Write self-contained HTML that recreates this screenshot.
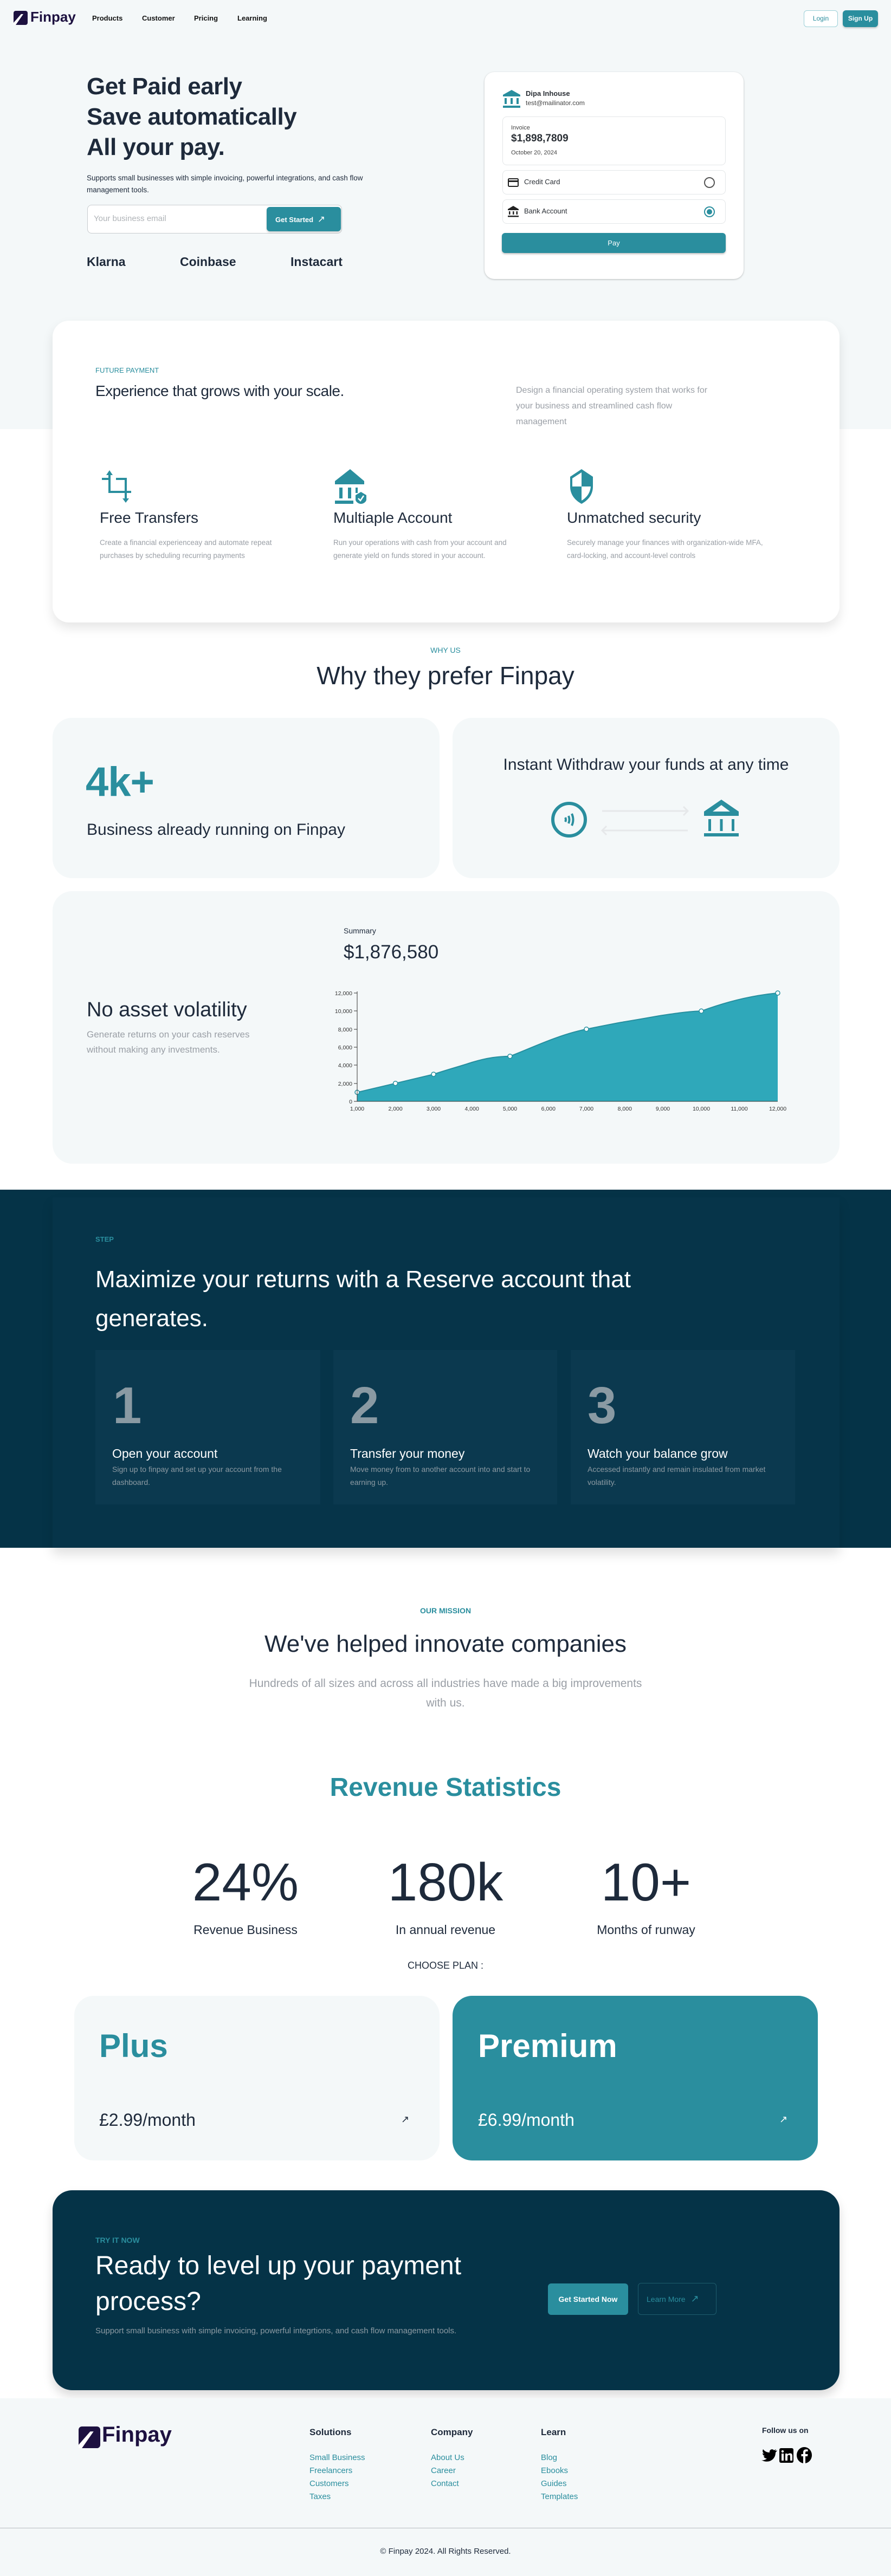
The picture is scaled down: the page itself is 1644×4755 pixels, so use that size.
<!DOCTYPE html>
<html><head><meta charset="utf-8">
<style>
*{margin:0;padding:0;box-sizing:border-box}
body{width:1644px;height:4755px;position:relative;background:#fff;font-family:"Liberation Sans",Arial,sans-serif;color:#1e2a3b;overflow:hidden}
.a{position:absolute;white-space:nowrap}
.teal{color:#2a8e9e}
.gray{color:#9a9fa6}
.card{position:absolute;border-radius:36px}
</style></head><body>

<div class="a" style="left:0;top:0;width:1644px;height:792px;background:#f4f8f9"></div>

<svg class="a" style="left:25px;top:20px" width="26" height="26" viewBox="0 0 26 26"><rect width="26" height="26" rx="4" fill="#1d1140"/><path d="M0 22 L14 6 L18 6 L4 26 L0 26Z" fill="#fff"/></svg>
<div class="a" style="left:56px;top:16px;font-size:26px;font-weight:700;color:#1d1140">Finpay</div>
<div class="a" style="left:170px;top:26px;font-size:13px;font-weight:700;color:#111">Products</div>
<div class="a" style="left:262px;top:26px;font-size:13px;font-weight:700;color:#111">Customer</div>
<div class="a" style="left:358px;top:26px;font-size:13px;font-weight:700;color:#111">Pricing</div>
<div class="a" style="left:438px;top:26px;font-size:13px;font-weight:700;color:#111">Learning</div>
<div class="a" style="left:1483px;top:19px;width:63px;height:31px;border:1px solid #9cd0d8;border-radius:6px;background:#fff;color:#2a8e9e;font-size:12px;text-align:center;line-height:29px">Login</div>
<div class="a" style="left:1555px;top:19px;width:65px;height:31px;border-radius:6px;background:#2a8e9e;color:#fff;font-size:12px;font-weight:700;text-align:center;line-height:31px;box-shadow:0 2px 3px rgba(0,0,0,.2)">Sign Up</div>

<div class="a" style="left:160px;top:132px;font-size:44px;font-weight:700;line-height:56px;color:#1e2a3b;letter-spacing:-0.5px">Get Paid early<br>Save automatically<br>All your pay.</div>
<div class="a" style="left:160px;top:318px;font-size:13.5px;line-height:22px;color:#1e2a3b;white-space:normal;width:540px">Supports small businesses with simple invoicing, powerful integrations, and cash flow management tools.</div>
<div class="a" style="left:161px;top:378px;width:470px;height:53px;border:1px solid #c8cccf;border-radius:8px;background:#fff"></div>
<div class="a" style="left:173px;top:395px;font-size:15px;color:#b0b4b8">Your business email</div>
<div class="a" style="left:492px;top:382px;width:137px;height:45px;border-radius:6px;background:#2a8e9e;color:#fff;font-size:13px;font-weight:700;line-height:45px;padding-left:16px;box-shadow:0 2px 3px rgba(0,0,0,.2)">Get Started <span style="font-size:17px;font-weight:400;margin-left:4px">↗</span></div>
<div class="a" style="left:160px;top:470px;font-size:23px;font-weight:700;color:#1e2a3b">Klarna</div>
<div class="a" style="left:332px;top:470px;font-size:23px;font-weight:700;color:#1e2a3b">Coinbase</div>
<div class="a" style="left:536px;top:470px;font-size:23px;font-weight:700;color:#1e2a3b">Instacart</div>

<div class="a" style="left:894px;top:133px;width:478px;height:382px;background:#fff;border-radius:18px;box-shadow:0 1px 3px rgba(0,0,0,.25)"></div>
<svg class="a" style="left:928px;top:166px" width="32" height="33" viewBox="0 0 32 33"><path d="M16 0 L32 9 L32 12 L0 12 L0 9Z" fill="#2a8e9e"/><rect x="3" y="15" width="4" height="11" fill="#2a8e9e"/><rect x="14" y="15" width="4" height="11" fill="#2a8e9e"/><rect x="25" y="15" width="4" height="11" fill="#2a8e9e"/><rect x="0" y="29" width="32" height="4" fill="#2a8e9e"/></svg>
<div class="a" style="left:970px;top:165px;font-size:13px;font-weight:700;color:#2a2f35">Dipa Inhouse</div>
<div class="a" style="left:970px;top:183px;font-size:12px;color:#444">test@mailinator.com</div>
<div class="a" style="left:927px;top:215px;width:412px;height:90px;border:1px solid #e3e6e8;border-radius:8px"></div>
<div class="a" style="left:943px;top:230px;font-size:11px;color:#444">Invoice</div>
<div class="a" style="left:943px;top:245px;font-size:19px;font-weight:700;color:#2a2f35">$1,898,7809</div>
<div class="a" style="left:943px;top:276px;font-size:11px;color:#444">October 20, 2024</div>
<div class="a" style="left:927px;top:314px;width:412px;height:45px;border:1px solid #e3e6e8;border-radius:8px"></div>
<svg class="a" style="left:937px;top:329px" width="20" height="16" viewBox="0 0 20 16"><rect x="1" y="1" width="18" height="14" rx="1.5" fill="none" stroke="#222" stroke-width="2"/><rect x="1" y="4" width="18" height="3" fill="#222"/></svg>
<div class="a" style="left:967px;top:328px;font-size:13px;color:#2a2f35">Credit Card</div>
<div class="a" style="left:1299px;top:327px;width:20px;height:20px;border:2px solid #555;border-radius:50%"></div>
<div class="a" style="left:927px;top:368px;width:412px;height:45px;border:1px solid #e3e6e8;border-radius:8px"></div>
<svg class="a" style="left:937px;top:380px" width="20" height="21" viewBox="0 0 20 21"><path d="M10 0 L20 6 L20 8 L0 8 L0 6Z" fill="#222"/><rect x="2" y="10" width="2.5" height="6" fill="#222"/><rect x="9" y="10" width="2.5" height="6" fill="#222"/><rect x="15.5" y="10" width="2.5" height="6" fill="#222"/><rect x="0" y="18" width="20" height="2.5" fill="#222"/></svg>
<div class="a" style="left:967px;top:382px;font-size:13px;color:#2a2f35">Bank Account</div>
<div class="a" style="left:1299px;top:381px;width:20px;height:20px;border:2px solid #2a8e9e;border-radius:50%"><div style="position:absolute;left:3px;top:3px;width:10px;height:10px;border-radius:50%;background:#2a8e9e"></div></div>
<div class="a" style="left:926px;top:430px;width:413px;height:37px;background:#2a8e9e;border-radius:6px;color:#fff;font-size:13px;text-align:center;line-height:37px;box-shadow:0 2px 3px rgba(0,0,0,.25)">Pay</div>

<div class="a" style="left:97px;top:592px;width:1452px;height:557px;background:#fff;border-radius:30px;box-shadow:0 10px 20px rgba(0,0,0,.1)"></div>
<div class="a teal" style="left:176px;top:676px;font-size:13px">FUTURE PAYMENT</div>
<div class="a" style="left:176px;top:706px;font-size:28px;font-weight:400;color:#1e2a3b;letter-spacing:-0.5px">Experience that grows with your scale.</div>
<div class="a gray" style="left:952px;top:706px;font-size:16px;line-height:29px;white-space:normal;width:355px">Design a financial operating system that works for your business and streamlined cash flow management</div>

<svg class="a" style="left:186px;top:868px" width="60" height="62" viewBox="0 0 60 62"><path d="M16 0 L10 9 L14 9 L14 42 L44 42 L44 52 L40 52 L46 60 L52 52 L48 52 L48 42 L56 42 L56 38 L48 38 L48 14 L28 14 L28 18 L44 18 L44 38 L18 38 L18 9 L22 9Z" fill="#2a8e9e"/><rect x="2" y="14" width="14" height="4" fill="#2a8e9e"/></svg>
<svg class="a" style="left:618px;top:866px" width="62" height="64" viewBox="0 0 62 64"><path d="M28 0 L54 22 L54 28 L0 28 L0 22Z" fill="#2a8e9e"/><rect x="8" y="34" width="6" height="20" fill="#2a8e9e"/><rect x="24" y="34" width="6" height="20" fill="#2a8e9e"/><rect x="38" y="34" width="4" height="10" fill="#2a8e9e"/><rect x="0" y="58" width="34" height="6" fill="#2a8e9e"/><path d="M48 42 L58 48 L58 56 C58 60 53 64 48 64 C43 64 38 60 38 56 L38 48Z" fill="#2a8e9e"/><path d="M43 54 L47 58 L53 49" stroke="#fff" stroke-width="2.5" fill="none"/></svg>
<svg class="a" style="left:1050px;top:866px" width="46" height="64" viewBox="0 0 46 64"><path d="M23 0 L44 14 L44 32 C44 48 34 58 23 64 C12 58 2 48 2 32 L2 14Z" fill="#2a8e9e"/><path d="M23 6 L23 32 L6 32 L6 17Z" fill="#fff"/><path d="M23 32 L40 32 C39 44 32 53 23 58Z" fill="#fff"/></svg>

<div class="a" style="left:184px;top:940px;font-size:28px;font-weight:300;color:#1e2a3b">Free Transfers</div>
<div class="a" style="left:615px;top:940px;font-size:28px;font-weight:300;color:#1e2a3b">Multiaple Account</div>
<div class="a" style="left:1046px;top:940px;font-size:28px;font-weight:300;color:#1e2a3b">Unmatched security</div>
<div class="a gray" style="left:184px;top:990px;font-size:13.5px;line-height:24px;white-space:normal;width:320px">Create a financial experienceay and automate repeat purchases by scheduling recurring payments</div>
<div class="a gray" style="left:615px;top:990px;font-size:13.5px;line-height:24px;white-space:normal;width:375px">Run your operations with cash from your account and generate yield on funds stored in your account.</div>
<div class="a gray" style="left:1046px;top:990px;font-size:13.5px;line-height:24px;white-space:normal;width:365px">Securely manage your finances with organization-wide MFA, card-locking, and account-level controls</div>

<div class="a teal" style="left:0;width:1644px;text-align:center;top:1192px;font-size:14px">WHY US</div>
<div class="a" style="left:0;width:1644px;text-align:center;top:1220px;font-size:46px;font-weight:300;color:#1e2a3b">Why they prefer Finpay</div>

<div class="card" style="left:97px;top:1325px;width:714px;height:296px;background:#f4f8f9"></div>
<div class="card" style="left:835px;top:1325px;width:714px;height:296px;background:#f4f8f9"></div>
<div class="a teal" style="left:158px;top:1400px;font-size:76px;font-weight:700;letter-spacing:-1px">4k+</div>
<div class="a" style="left:160px;top:1515px;font-size:30px;font-weight:300;color:#1e2a3b">Business already running on Finpay</div>
<div class="a" style="left:835px;width:714px;text-align:center;top:1395px;font-size:30px;font-weight:300;color:#1e2a3b">Instant Withdraw your funds at any time</div>
<svg class="a" style="left:1015px;top:1478px" width="70" height="70" viewBox="0 0 70 70"><circle cx="35" cy="35" r="30" fill="none" stroke="#2a8e9e" stroke-width="6"/><path d="M34 28 Q37 35 34 42" stroke="#2a8e9e" stroke-width="4" fill="none"/><path d="M40 24 Q45 35 40 46" stroke="#2a8e9e" stroke-width="4" fill="none"/><path d="M28 31 Q30 35 28 39" stroke="#2a8e9e" stroke-width="4" fill="none"/></svg>
<svg class="a" style="left:1105px;top:1485px" width="170" height="60" viewBox="0 0 170 60"><path d="M6 12 L164 12 M156 4 L164 12 L156 20" stroke="#e6e8ea" stroke-width="3" fill="none"/><path d="M164 48 L6 48 M14 40 L6 48 L14 56" stroke="#e6e8ea" stroke-width="3" fill="none"/></svg>
<svg class="a" style="left:1299px;top:1476px" width="64" height="68" viewBox="0 0 64 68"><path d="M32 0 L64 22 L64 30 L0 30 L0 22Z" fill="#2a8e9e"/><path d="M32 10 L48 22 L16 22Z" fill="#f4f8f9"/><rect x="8" y="36" width="5" height="22" fill="#2a8e9e"/><rect x="29.5" y="36" width="5" height="22" fill="#2a8e9e"/><rect x="51" y="36" width="5" height="22" fill="#2a8e9e"/><rect x="0" y="62" width="64" height="6" fill="#2a8e9e"/></svg>

<div class="card" style="left:97px;top:1645px;width:1452px;height:503px;background:#f4f8f9"></div>
<div class="a" style="left:160px;top:1843px;font-size:38px;font-weight:300;color:#1e2a3b">No asset volatility</div>
<div class="a gray" style="left:160px;top:1896px;font-size:17px;line-height:28px">Generate returns on your cash reserves<br>without making any investments.</div>
<div class="a" style="left:634px;top:1710px;font-size:14px;color:#1e2a3b">Summary</div>
<div class="a" style="left:634px;top:1738px;font-size:35px;font-weight:300;color:#1e2a3b">$1,876,580</div>
<svg class="a" style="left:600px;top:1800px" width="880" height="270" viewBox="0 0 880 270" font-family="Liberation Sans, sans-serif" font-size="10.5" fill="#333">
<path d="M59 216.3 L129.6 199.7 L200 183 C230 173 250 168 270.7 161 C300 152 320 150 341 149.7 C380 135 430 110 482 99.7 C520 92 540 88 552.8 86 C590 80 610 76 623 74 C650 70 670 67 694 66.3 C730 53 780 38 835 33 L835 233 L59 233Z" fill="#2fa8ba"/>
<path d="M59 216.3 L129.6 199.7 L200 183 C230 173 250 168 270.7 161 C300 152 320 150 341 149.7 C380 135 430 110 482 99.7 C520 92 540 88 552.8 86 C590 80 610 76 623 74 C650 70 670 67 694 66.3 C730 53 780 38 835 33" fill="none" stroke="#268f9f" stroke-width="2"/>
<g fill="#fff" stroke="#268f9f" stroke-width="1.5"><circle cx="59" cy="216.3" r="4"/><circle cx="129.6" cy="199.7" r="4"/><circle cx="200" cy="183" r="4"/><circle cx="341" cy="149.7" r="4"/><circle cx="482" cy="99.7" r="4"/><circle cx="694" cy="66.3" r="4"/><circle cx="835" cy="33" r="4"/></g>
<path d="M59 30 L59 233 L835 233" stroke="#333" stroke-width="1" fill="none"/>
<g text-anchor="end"><text x="50" y="237">0</text><text x="50" y="204">2,000</text><text x="50" y="170">4,000</text><text x="50" y="137">6,000</text><text x="50" y="104">8,000</text><text x="50" y="70">10,000</text><text x="50" y="37">12,000</text></g>
<g stroke="#333"><path d="M53 233h6M53 200h6M53 166h6M53 133h6M53 100h6M53 66h6M53 33h6"/></g>
<g text-anchor="middle"><text x="59" y="250">1,000</text><text x="129.6" y="250">2,000</text><text x="200" y="250">3,000</text><text x="270.7" y="250">4,000</text><text x="341" y="250">5,000</text><text x="411.8" y="250">6,000</text><text x="482" y="250">7,000</text><text x="552.8" y="250">8,000</text><text x="623" y="250">9,000</text><text x="694" y="250">10,000</text><text x="764" y="250">11,000</text><text x="835" y="250">12,000</text></g>
</svg>

<div class="a" style="left:0;top:2196px;width:1644px;height:661px;background:#053347"></div>
<div class="a" style="left:97px;top:2210px;width:1452px;height:647px;background:#063449;box-shadow:0 12px 20px rgba(0,0,0,.12)"></div>
<div class="a teal" style="left:176px;top:2280px;font-size:13px;font-weight:700">STEP</div>
<div class="a" style="left:176px;top:2326px;font-size:44px;font-weight:300;color:#fff;line-height:72px;white-space:normal;width:1150px">Maximize your returns with a Reserve account that generates.</div>
<div class="a" style="left:176px;top:2492px;width:415px;height:285px;background:#0b394f"></div>
<div class="a" style="left:615px;top:2492px;width:413px;height:285px;background:#0b394f"></div>
<div class="a" style="left:1053px;top:2492px;width:414px;height:285px;background:#0b394f"></div>
<div class="a" style="left:208px;top:2545px;font-size:96px;font-weight:700;color:#8a9aa3;line-height:100px">1</div>
<div class="a" style="left:646px;top:2545px;font-size:96px;font-weight:700;color:#8a9aa3;line-height:100px">2</div>
<div class="a" style="left:1084px;top:2545px;font-size:96px;font-weight:700;color:#8a9aa3;line-height:100px">3</div>
<div class="a" style="left:207px;top:2670px;font-size:23px;font-weight:300;color:#fff">Open your account</div>
<div class="a" style="left:646px;top:2670px;font-size:23px;font-weight:300;color:#fff">Transfer your money</div>
<div class="a" style="left:1084px;top:2670px;font-size:23px;font-weight:300;color:#fff">Watch your balance grow</div>
<div class="a" style="left:207px;top:2700px;font-size:14px;line-height:24px;color:#8c9aa3;white-space:normal;width:345px">Sign up to finpay and set up your account from the dashboard.</div>
<div class="a" style="left:646px;top:2700px;font-size:14px;line-height:24px;color:#8c9aa3;white-space:normal;width:345px">Move money from to another account into and start to earning up.</div>
<div class="a" style="left:1084px;top:2700px;font-size:14px;line-height:24px;color:#8c9aa3;white-space:normal;width:345px">Accessed instantly and remain insulated from market volatility.</div>

<div class="a teal" style="left:0;width:1644px;text-align:center;top:2965px;font-size:14px;font-weight:700">OUR MISSION</div>
<div class="a" style="left:0;width:1644px;text-align:center;top:3010px;font-size:44px;font-weight:300;color:#1e2a3b">We've helped innovate companies</div>
<div class="a gray" style="left:392px;width:860px;white-space:normal;text-align:center;top:3090px;font-size:21px;line-height:36px">Hundreds of all sizes and across all industries have made a big improvements<br>with us.</div>
<div class="a teal" style="left:0;width:1644px;text-align:center;top:3272px;font-size:48px;font-weight:700">Revenue Statistics</div>
<div class="a" style="left:253px;width:400px;text-align:center;top:3418px;font-size:98px;font-weight:300;color:#1e2a3b">24%</div>
<div class="a" style="left:622px;width:400px;text-align:center;top:3418px;font-size:98px;font-weight:300;color:#1e2a3b">180k</div>
<div class="a" style="left:992px;width:400px;text-align:center;top:3418px;font-size:98px;font-weight:300;color:#1e2a3b">10+</div>
<div class="a" style="left:253px;width:400px;text-align:center;top:3549px;font-size:23px;font-weight:300;color:#1e2a3b">Revenue Business</div>
<div class="a" style="left:622px;width:400px;text-align:center;top:3549px;font-size:23px;font-weight:300;color:#1e2a3b">In annual revenue</div>
<div class="a" style="left:992px;width:400px;text-align:center;top:3549px;font-size:23px;font-weight:300;color:#1e2a3b">Months of runway</div>
<div class="a" style="left:0;width:1644px;text-align:center;top:3618px;font-size:18px;color:#1e2a3b">CHOOSE PLAN :</div>

<div class="card" style="left:137px;top:3684px;width:674px;height:304px;background:#f4f8f9"></div>
<div class="card" style="left:835px;top:3684px;width:674px;height:304px;background:#2a8e9e"></div>
<div class="a teal" style="left:183px;top:3742px;font-size:60px;font-weight:700">Plus</div>
<div class="a" style="left:882px;top:3742px;font-size:60px;font-weight:700;color:#fff">Premium</div>
<div class="a" style="left:183px;top:3895px;font-size:32px;font-weight:300;color:#1e2a3b">£2.99/month</div>
<div class="a" style="left:882px;top:3895px;font-size:32px;font-weight:300;color:#fff">£6.99/month</div>
<div class="a" style="left:740px;top:3902px;font-size:18px;color:#1e2a3b">↗</div>
<div class="a" style="left:1438px;top:3902px;font-size:18px;color:#fff">↗</div>

<div class="card" style="left:97px;top:4043px;width:1452px;height:369px;background:#053347;box-shadow:0 10px 18px rgba(0,0,0,.15)"></div>
<div class="a teal" style="left:176px;top:4127px;font-size:14px;font-weight:700">TRY IT NOW</div>
<div class="a" style="left:176px;top:4150px;font-size:48px;font-weight:300;color:#fff;line-height:66px">Ready to level up your payment<br>process?</div>
<div class="a" style="left:176px;top:4294px;font-size:15px;color:#8c9aa3">Support small business with simple invoicing, powerful integrtions, and cash flow management tools.</div>
<div class="a" style="left:1011px;top:4215px;width:148px;height:58px;background:#2a8e9e;border-radius:6px;color:#fff;font-size:14px;font-weight:700;text-align:center;line-height:58px">Get Started Now</div>
<div class="a" style="left:1177px;top:4214px;width:145px;height:59px;border:1px solid #1d5c6c;border-radius:6px;color:#2a8e9e;font-size:14px;line-height:57px;padding-left:15px">Learn More <span style="font-size:18px;margin-left:6px">↗</span></div>

<div class="a" style="left:0;top:4427px;width:1644px;height:328px;background:#f4f8f9"></div>
<svg class="a" style="left:145px;top:4479px" width="40" height="40" viewBox="0 0 26 26"><rect width="26" height="26" rx="4" fill="#1d1140"/><path d="M0 22 L14 6 L18 6 L4 26 L0 26Z" fill="#fff"/></svg>
<div class="a" style="left:188px;top:4472px;font-size:40px;font-weight:700;color:#1d1140">Finpay</div>
<div class="a" style="left:571px;top:4480px;font-size:17px;font-weight:700;color:#1e2a3b">Solutions</div>
<div class="a" style="left:795px;top:4480px;font-size:17px;font-weight:700;color:#1e2a3b">Company</div>
<div class="a" style="left:998px;top:4480px;font-size:17px;font-weight:700;color:#1e2a3b">Learn</div>
<div class="a teal" style="left:571px;top:4525px;font-size:15px;line-height:24px">Small Business<br>Freelancers<br>Customers<br>Taxes</div>
<div class="a teal" style="left:795px;top:4525px;font-size:15px;line-height:24px">About Us<br>Career<br>Contact</div>
<div class="a teal" style="left:998px;top:4525px;font-size:15px;line-height:24px">Blog<br>Ebooks<br>Guides<br>Templates</div>
<div class="a" style="left:1406px;top:4478px;font-size:14px;font-weight:700;color:#1e2a3b">Follow us on</div>
<svg class="a" style="left:1404px;top:4517px" width="96" height="30" viewBox="0 0 96 30"><path d="M30 6 C28 7 27 7 26 7 C27 6 28 5 28 4 C27 5 26 5 24 6 C21 2 15 5 16 10 C11 10 7 8 4 4 C2 8 4 11 6 12 C5 12 4 12 3 11 C3 14 5 16 8 17 C7 17 6 17 5 17 C6 20 8 21 11 21 C8 24 4 25 1 24 C13 31 27 24 27 10 C28 9 29 8 30 6Z" fill="#000"/><rect x="34" y="2" width="26" height="27" rx="3" fill="#000"/><rect x="38" y="12" width="4" height="13" fill="#fff"/><circle cx="40" cy="8" r="2.2" fill="#fff"/><path d="M45 12h4v2c1-2 3-2.5 5-2.5 3 0 4 2 4 5V25h-4v-8c0-2-1-2.5-2-2.5s-3 .5-3 2.5v8h-4Z" fill="#fff"/><ellipse cx="80" cy="15" rx="14" ry="15" fill="#000"/><path d="M82 30 V17 h4 l.6-4 H82 v-3 c0-1.2.5-2 2-2 h2.6 V4.5 C86 4.4 84.5 4.3 83.3 4.3 c-3.3 0-5.3 2-5.3 5.4 V13 h-3.5 v4 H78 v13Z" fill="#fff"/></svg>
<div class="a" style="left:0;top:4666px;width:1644px;height:1px;background:#b8bcc0"></div>
<div class="a" style="left:0;width:1644px;text-align:center;top:4701px;font-size:15px;color:#1e2a3b">© Finpay 2024. All Rights Reserved.</div>
</body></html>
